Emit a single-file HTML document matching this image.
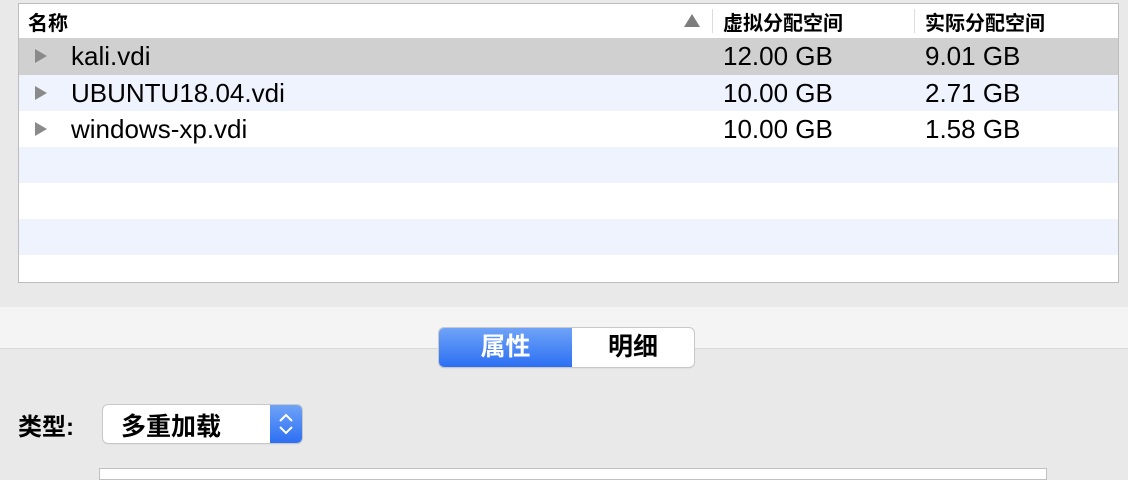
<!DOCTYPE html><html><head><meta charset="utf-8"><style>
body{margin:0;width:1128px;height:472px;background:#e9e9e9;position:relative;overflow:hidden;font-family:"Liberation Sans","Noto Sans CJK SC",sans-serif;color:#000}
.box{position:absolute;left:18px;top:3px;width:1099px;height:278px;border:1px solid #bdbdbd;background:#fff;overflow:hidden}
.hdr{position:absolute;left:0;top:0;width:100%;height:34px;background:#fff;border-bottom:1px solid #e2e2e2;font-size:20px;font-weight:bold}
.hdr span{position:absolute;top:3px}
.sep{position:absolute;top:5px;width:1px;height:24px;background:#dcdcdc}
.row{position:absolute;left:0;width:100%;height:36px;font-size:26px}
.row span{position:absolute;top:3px}
.tri{position:absolute;left:16px;top:11px;width:0;height:0;border-left:12px solid #8a8a8a;border-top:7px solid transparent;border-bottom:7px solid transparent}
.band{position:absolute;left:0;top:307px;width:1128px;height:41px;background:#f4f4f4;border-bottom:1px solid #d8d8d8}
.seg{position:absolute;left:439px;top:328px;width:255px;height:39px;border-radius:5px;background:#fff;box-shadow:0 0 0 1px #c8c8c8,0 1px 1px #b0b0b0;font-size:25px;font-weight:bold;overflow:hidden}
.seg .a{position:absolute;left:0;top:0;width:133px;height:39px;background:linear-gradient(#6fa3f7,#2c6ff3);color:#fff;text-align:center;line-height:39px}
.seg .b{position:absolute;left:133px;top:0;width:122px;height:39px;text-align:center;line-height:39px}
.pop{position:absolute;left:103px;top:405px;width:199px;height:38px;border-radius:5px;background:#fff;box-shadow:0 0 0 1px #c8c8c8,0 1px 1px #b0b0b0;font-size:25px;font-weight:bold;overflow:hidden}
.pop .t{position:absolute;left:18px;top:2px}
.pop .s{position:absolute;right:0;top:0;width:32px;height:38px;background:linear-gradient(#6fa3f7,#2c6ff3)}
</style></head><body>
<div class="box">
<div class="hdr"><span style="left:9px">名称</span>
<div style="position:absolute;left:665px;top:10px;width:0;height:0;border-bottom:13px solid #7d7d7d;border-left:8px solid transparent;border-right:8px solid transparent"></div>
<div class="sep" style="left:693px"></div><span style="left:704px">虚拟分配空间</span>
<div class="sep" style="left:895px"></div><span style="left:906px">实际分配空间</span></div>
<div class="row" style="top:34px;height:37px;background:#d0d0d0"><div class="tri"></div><span style="left:52px">kali.vdi</span><span style="left:704px">12.00 GB</span><span style="left:906px">9.01 GB</span></div>
<div class="row" style="top:71px;background:#eef3fd"><div class="tri"></div><span style="left:52px">UBUNTU18.04.vdi</span><span style="left:704px">10.00 GB</span><span style="left:906px">2.71 GB</span></div>
<div class="row" style="top:107px;background:#fff"><div class="tri"></div><span style="left:52px">windows-xp.vdi</span><span style="left:704px">10.00 GB</span><span style="left:906px">1.58 GB</span></div>
<div class="row" style="top:143px;background:#eef3fd"></div>
<div class="row" style="top:179px;background:#fff"></div>
<div class="row" style="top:215px;background:#eef3fd"></div>
</div>
<div class="band"></div>
<div class="seg"><div class="a">属性</div><div class="b">明细</div></div>
<div style="position:absolute;left:18px;top:407px;font-size:24px;font-weight:bold">类型:</div>
<div class="pop"><span class="t">多重加载</span><div class="s"><svg width="32" height="38" viewBox="0 0 32 38"><path d="M10 16 L16 10 L22 16 M10 22 L16 28 L22 22" stroke="#fff" stroke-width="2" fill="none"/></svg></div></div>
<div style="position:absolute;left:99px;top:468px;width:946px;height:10px;background:#fff;border:1px solid #c0c0c0"></div>
</body></html>
